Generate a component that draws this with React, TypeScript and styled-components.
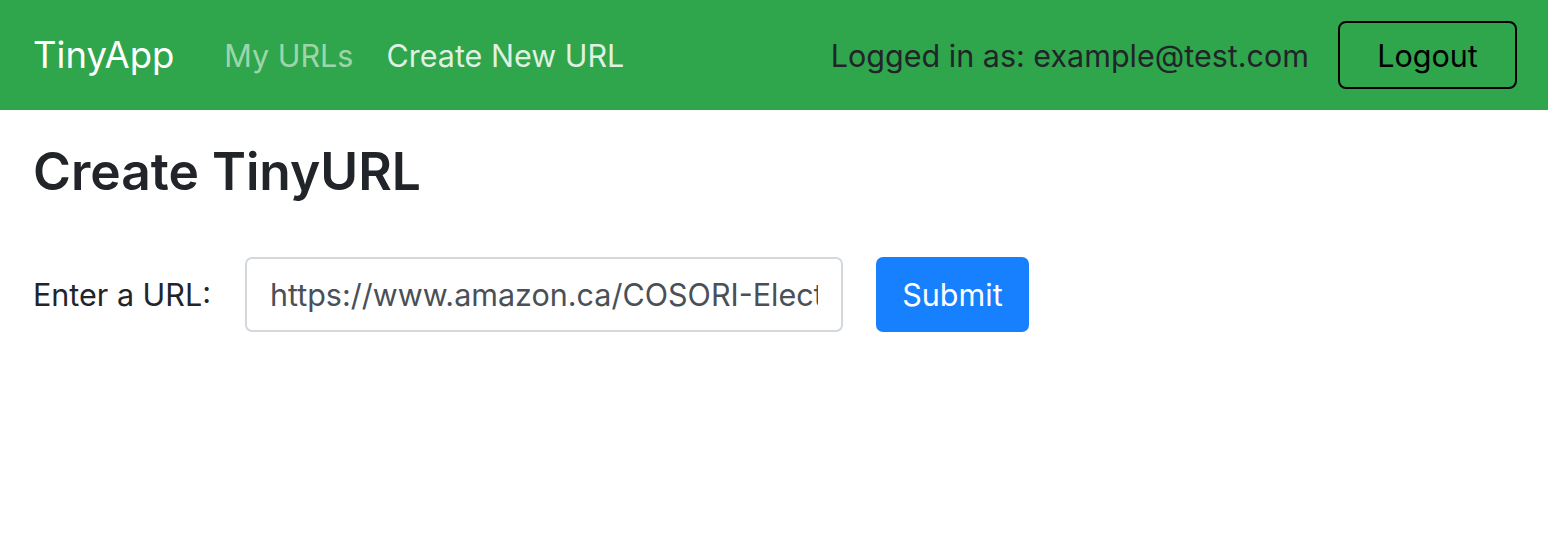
import React from 'react'
import styled, { createGlobalStyle } from 'styled-components'

const GlobalStyle = createGlobalStyle`
  * { box-sizing: border-box; }
  body {
    margin: 0;
    background: #fff;
    font-family: Inter, "Noto Sans", "Liberation Sans", sans-serif;
    color: #212529;
  }
`

const Navbar = styled.nav`
  display: flex;
  align-items: center;
  height: 110px;
  padding: 0 31px 0 33px;
  background: #2fa64c;
`

const Brand = styled.a`
  font-size: 36.5px;
  color: #fff;
  text-decoration: none;
  margin-right: 50px;
`

const NavLinks = styled.div`
  display: flex;
  align-items: center;
  gap: 33px;
  flex: 1;
`

const NavLink = styled.a<{ $active?: boolean }>`
  font-size: 30.5px;
  text-decoration: none;
  color: ${p => (p.$active ? 'rgba(255, 255, 255, 0.85)' : 'rgba(255, 255, 255, 0.55)')};
`

const UserText = styled.span`
  font-size: 30.5px;
  color: #212529;
  margin-right: 29px;
`

const LogoutButton = styled.button`
  width: 179px;
  height: 68px;
  border: 2px solid #000;
  border-radius: 8px;
  background: transparent;
  color: #000;
  font-family: inherit;
  font-size: 30.5px;
  cursor: pointer;
`

const Main = styled.main`
  padding: 31px 33px 0;
`

const Heading = styled.h1`
  margin: 0 0 54px;
  font-size: 51.5px;
  font-weight: 600;
  line-height: 1.2;
  color: #212529;
`

const Form = styled.form`
  display: flex;
  align-items: center;
`

const Label = styled.label`
  font-size: 30.5px;
  margin-right: 34px;
`

const Input = styled.input`
  width: 598px;
  height: 75px;
  padding: 0 23px;
  border: 2px solid #d3d8dd;
  border-radius: 7px;
  font-family: inherit;
  font-size: 30.5px;
  color: #495057;
  margin-right: 33px;
  outline: none;
`

const SubmitButton = styled.button`
  width: 153px;
  height: 75px;
  border: none;
  border-radius: 7px;
  background: #1780fe;
  color: #fff;
  font-family: inherit;
  font-size: 30.5px;
  cursor: pointer;
`

export default function App() {
  return (
    <>
      <GlobalStyle />
      <Navbar>
        <Brand href="#">TinyApp</Brand>
        <NavLinks>
          <NavLink href="#">My URLs</NavLink>
          <NavLink href="#" $active>Create New URL</NavLink>
        </NavLinks>
        <UserText>Logged in as: example@test.com</UserText>
        <LogoutButton type="button">Logout</LogoutButton>
      </Navbar>
      <Main>
        <Heading>Create TinyURL</Heading>
        <Form onSubmit={e => e.preventDefault()}>
          <Label htmlFor="longURL">Enter a URL:</Label>
          <Input
            id="longURL"
            type="text"
            defaultValue="https://www.amazon.ca/COSORI-Electric-Gooseneck-Variable-Temperature/dp/B07T1CH2HH"
          />
          <SubmitButton type="submit">Submit</SubmitButton>
        </Form>
      </Main>
    </>
  )
}
